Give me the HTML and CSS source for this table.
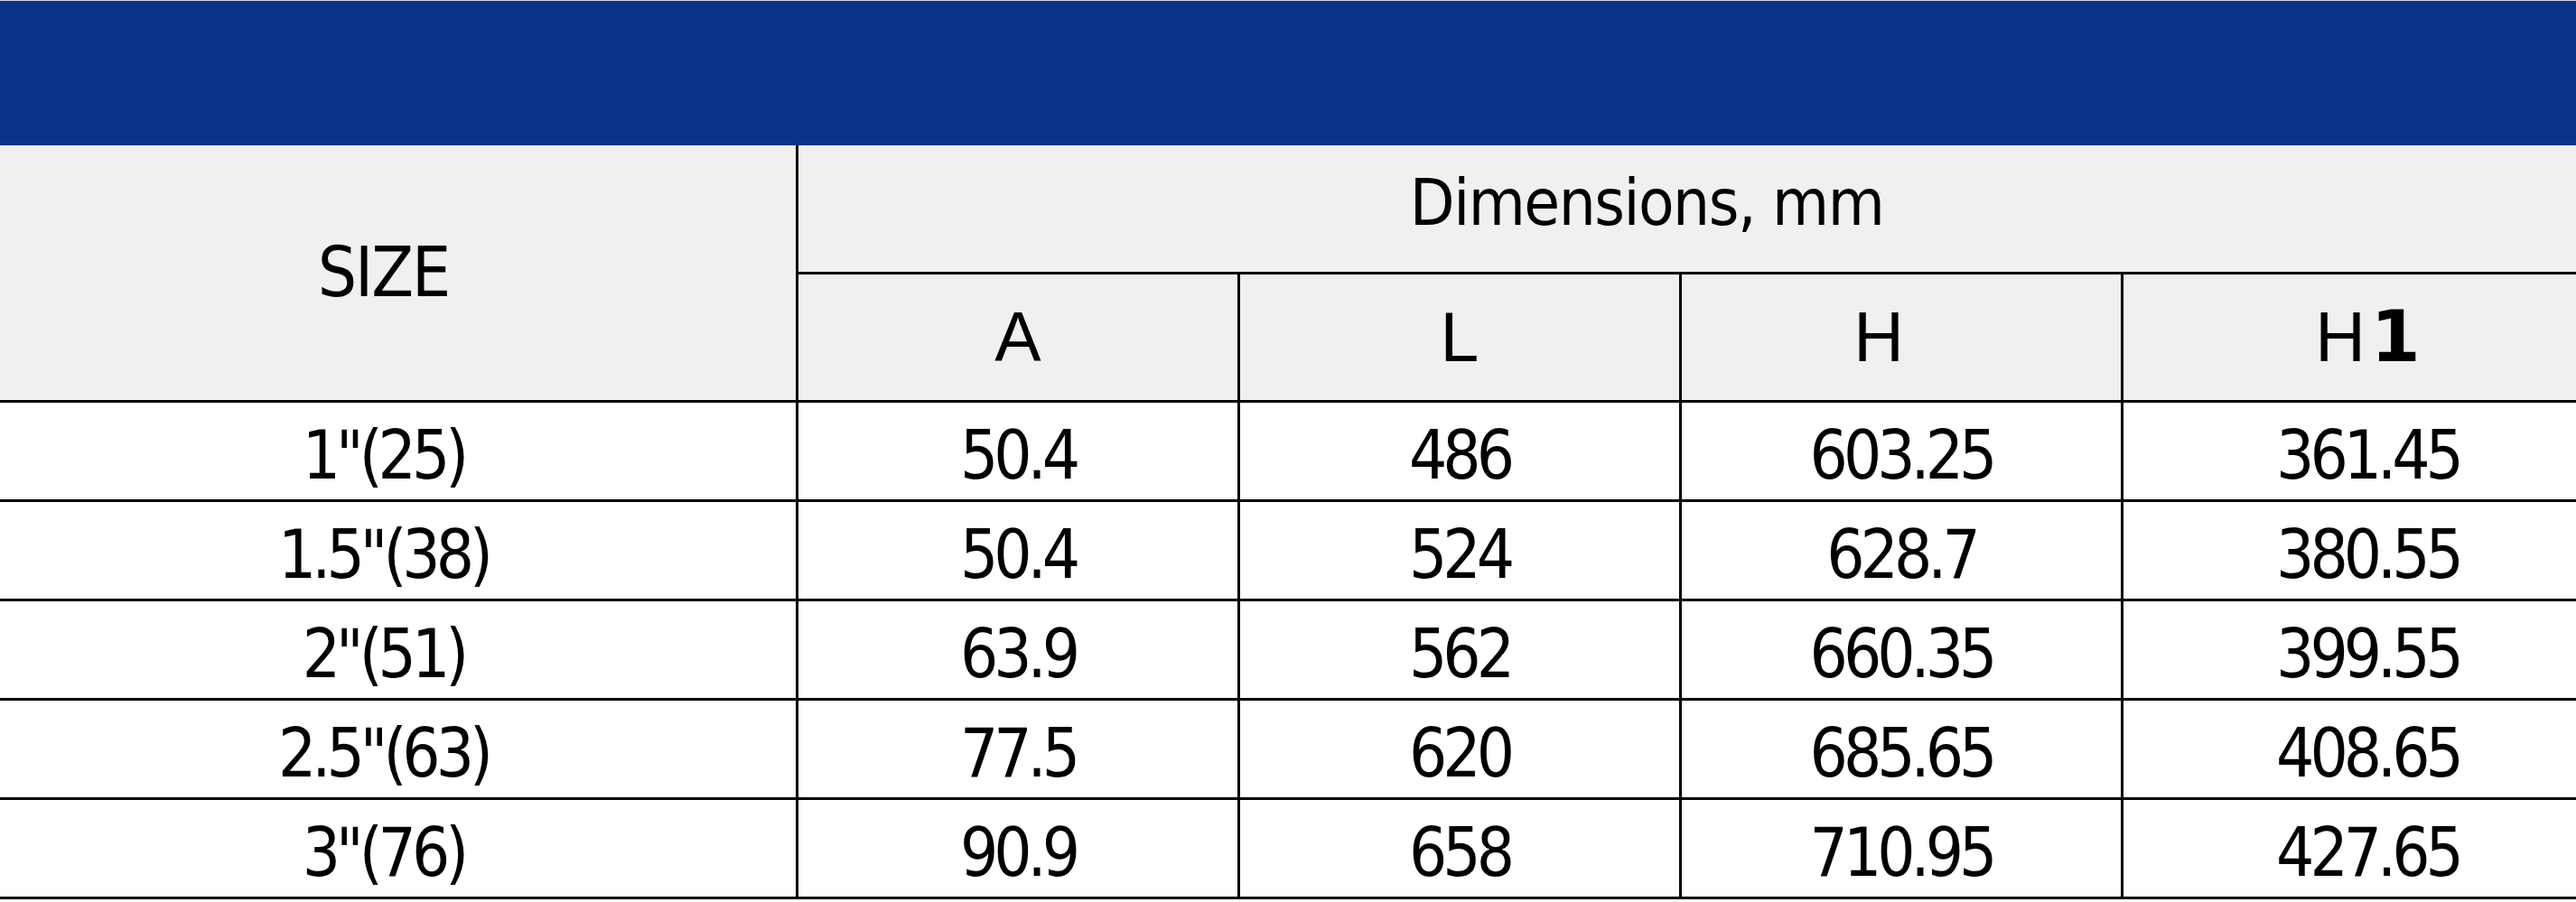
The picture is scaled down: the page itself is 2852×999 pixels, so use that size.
FILE: index.html
```html
<!DOCTYPE html>
<html lang="en">
<head>
<meta charset="utf-8">
<title>Dimensions table</title>
<link rel="stylesheet" href="styles.css">
</head>
<body>
<div class="page">
  <div class="banner"></div>
  <table class="dims">
    <colgroup>
      <col class="c-size">
      <col class="c-dim">
      <col class="c-dim">
      <col class="c-dim">
      <col class="c-last">
    </colgroup>
    <thead>
      <tr class="h1row">
        <th class="size" rowspan="2">SIZE</th>
        <th class="group" colspan="4">Dimensions, mm</th>
      </tr>
      <tr class="h2row">
        <th class="letter">A</th>
        <th class="letter">L</th>
        <th class="letter letter-h">H</th>
        <th class="letter">H<span class="bold-one">1</span></th>
      </tr>
    </thead>
    <tbody>
      <tr><td>1"(25)</td><td>50.4</td><td>486</td><td>603.25</td><td>361.45</td></tr>
      <tr><td>1.5"(38)</td><td>50.4</td><td>524</td><td>628.7</td><td>380.55</td></tr>
      <tr><td>2"(51)</td><td>63.9</td><td>562</td><td>660.35</td><td>399.55</td></tr>
      <tr><td>2.5"(63)</td><td>77.5</td><td>620</td><td>685.65</td><td>408.65</td></tr>
      <tr><td>3"(76)</td><td>90.9</td><td>658</td><td>710.95</td><td>427.65</td></tr>
    </tbody>
  </table>
</div>
</body>
</html>
```

FILE: styles.css
```css
html, body {
  margin: 0;
  padding: 0;
  background: #ffffff;
}

body {
  overflow: hidden;
  font-family: "DejaVu Sans Condensed", "DejaVu Sans", sans-serif;
  font-stretch: condensed;
  color: #000;
}

.page {
  width: 2852px;
  overflow: hidden;
}

.banner {
  height: 160px;
  background: #0a338a;
  border-top: 1px solid #d3d7e0;
}

.dims {
  border-collapse: collapse;
  table-layout: fixed;
  width: 2927px;
  margin-left: -35px;
}

.c-size { width: 916px; }
.c-dim { width: 489px; }
.c-last { width: 544px; }

.dims th,
.dims td {
  border: 3px solid #000;
  padding: 0;
  text-align: center;
  vertical-align: middle;
  font-size: 74px;
  font-weight: normal;
  line-height: 1.15;
  white-space: nowrap;
}

.dims thead th {
  background: #f0f0f0;
}

.dims thead tr:first-child th {
  border-top: none;
}

.h1row { height: 141px; }
.h2row { height: 142px; }

.size {
  font-size: 76px !important;
  letter-spacing: -2px;
}

.group {
  font-size: 72px !important;
  letter-spacing: -1.5px;
  padding-bottom: 12px !important;
  padding-right: 130px !important;
}

.letter {
  font-family: "Liberation Sans", "DejaVu Sans", sans-serif;
  font-stretch: normal;
  font-size: 77px !important;
}

.letter-h {
  padding-right: 50px !important;
}

.bold-one {
  font-family: "DejaVu Sans", sans-serif;
  font-weight: bold;
  font-size: 79px;
  margin-left: 6px;
}

.dims tbody tr { height: 110px; }

.dims tbody td {
  padding-top: 12px;
  letter-spacing: -5px;
}
```
